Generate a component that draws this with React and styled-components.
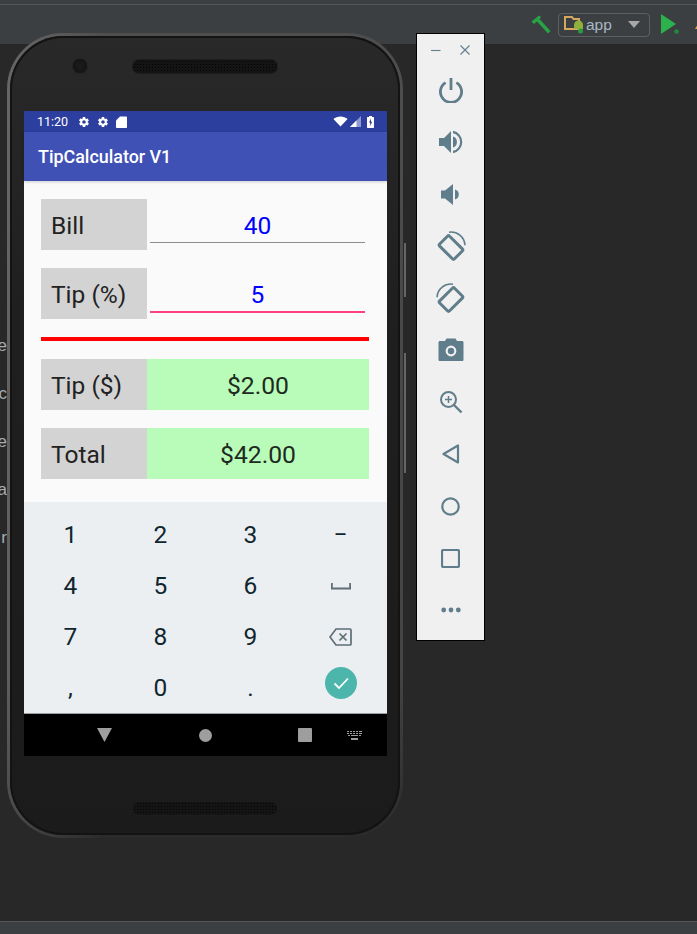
import React from 'react'
import styled, { createGlobalStyle } from 'styled-components'

const ICON = '#607d8b'
const SANS = 'Roboto, "Noto Sans", sans-serif'

const GlobalStyle = createGlobalStyle`
  html, body {
    margin: 0;
    padding: 0;
    height: 100%;
    background: #282828;
    font-family: ${SANS};
    overflow: hidden;
  }
  #root {
    height: 100%;
  }
`

const Ide = styled.div`
  position: relative;
  width: 697px;
  height: 934px;
  display: flex;
  flex-direction: column;
  overflow: hidden;
  background: #282828;
`

const TopStrip = styled.div`
  height: 5px;
  flex: none;
  box-sizing: border-box;
  background: #3c3f41;
  border-bottom: 1px solid #555759;
`

const Toolbar = styled.div`
  height: 39px;
  flex: none;
  background: #3c3f41;
  display: flex;
  align-items: center;
  justify-content: flex-end;
  box-sizing: border-box;
  overflow: hidden;
`

const ConfigSelect = styled.div`
  width: 92px;
  height: 24px;
  margin: 0 10px 0 7px;
  padding: 0 9px 0 5px;
  box-sizing: border-box;
  border: 1px solid #5e6060;
  border-radius: 4px;
  display: flex;
  align-items: center;
  color: #a9b7c6;
  font: 15.5px 'Liberation Sans', sans-serif;
`

const ConfigName = styled.span`
  flex: 1;
  margin-left: 2px;
  line-height: 21px;
`

const DebugSlot = styled.div`
  display: flex;
  margin: 0 -8px 0 15px;
`

const Workspace = styled.div`
  flex: 1;
  display: flex;
  flex-direction: column;
  padding-top: 280px;
  background: #282828;
`

const CodeLine = styled.div`
  width: 7px;
  height: 48px;
  overflow: hidden;
  display: flex;
  justify-content: flex-end;
  color: #a4adb5;
  font: 17px/44px 'Liberation Sans', sans-serif;
`

const StatusStrip = styled.div`
  height: 13px;
  flex: none;
  box-sizing: border-box;
  background: #3c3f41;
  border-top: 1px solid #555759;
`

/* the emulator window and its tool panel float over the IDE */
const Phone = styled.div`
  position: absolute;
  left: 7px;
  top: 33px;
  width: 396px;
  height: 805px;
  box-sizing: border-box;
  padding: 75px 16px 0 14px;
  border-radius: 56px;
  border: 3px solid transparent;
  background:
    linear-gradient(180deg, #292929 0%, #1f1f1f 35%, #1b1b1c 100%) padding-box,
    linear-gradient(90deg, rgba(255, 255, 255, 0.14), rgba(255, 255, 255, 0) 25%) border-box,
    linear-gradient(180deg, #4e4e4e 0%, #444 80%, #2a2a2a 100%) border-box;
  box-shadow: inset 0 0 0 2px #131313;
`

const SideKey = styled.div`
  position: absolute;
  left: 394px;
  top: ${(p) => p.$top}px;
  width: 2px;
  height: ${(p) => p.$height}px;
  background: #666;
`

const Camera = styled.div`
  position: absolute;
  left: 63px;
  top: 23px;
  width: 14px;
  height: 14px;
  border-radius: 50%;
  background: #1a1a1d;
  box-shadow: 0 0 0 1px #232323, inset 0 0 0 3px #161618;
`

const Speaker = styled.div`
  position: absolute;
  left: 123px;
  top: ${(p) => p.$top}px;
  width: 144px;
  height: 13px;
  border-radius: 6px;
  background-color: #141414;
  background-image: radial-gradient(circle, #050505 0.8px, transparent 1px);
  background-size: 3px 3px;
  box-shadow: 0 0 0 1px #1d1d1d;
`

const Screen = styled.div`
  width: 363px;
  height: 645px;
  display: flex;
  flex-direction: column;
  background: #fafafa;
`

const StatusBar = styled.div`
  height: 21px;
  flex: none;
  background: #2c3e9e;
  display: flex;
  align-items: center;
  padding: 0 13px;
  gap: 7px;
  color: #fff;
  font-size: 12.5px;
`

const Clock = styled.span`
  margin-right: 3px;
`

const Spacer = styled.div`
  flex: 1;
`

const SignalGroup = styled.div`
  display: flex;
  align-items: center;
  gap: 2px;
  margin-right: -1px;
`

const AppBar = styled.div`
  height: 49px;
  flex: none;
  background: #3f51b5;
  color: #fff;
  display: flex;
  align-items: center;
  padding-left: 14px;
  font-size: 17.9px;
  font-weight: 500;
  box-shadow: 0 1px 3px rgba(0, 0, 0, 0.18);
  z-index: 1;
`

const Form = styled.div`
  flex: 1;
  padding: 18px 18px 0 17px;
  display: flex;
  flex-direction: column;
  gap: 18px;
`

const Row = styled.div`
  display: flex;
  height: 51px;
`

const Label = styled.div`
  width: 106px;
  box-sizing: border-box;
  padding-left: 10px;
  background: #d3d3d3;
  color: #222;
  font-size: 24.5px;
  line-height: 53px;
`

const Field = styled.div`
  flex: 1;
  margin: 0 4px 0 3px;
  height: ${(p) => (p.$focused ? 45 : 44)}px;
  box-sizing: border-box;
  border-bottom: ${(p) => (p.$focused ? '2px solid #ff4081' : '1px solid #8c8c8c')};
  color: #0000ff;
  font-size: 24.5px;
  line-height: 53px;
  text-align: center;
`

const Result = styled.div`
  flex: 1;
  background: #b9fcb9;
  color: #1e2a1e;
  font-size: 24.7px;
  line-height: 53px;
  text-align: center;
`

const Divider = styled.div`
  height: 4px;
  background: #ff0000;
`

const Keyboard = styled.div`
  height: 212px;
  flex: none;
  box-sizing: border-box;
  background: #eceff1;
  padding-top: 7px;
  display: grid;
  grid-template-columns: repeat(4, 90px);
  grid-auto-rows: 51px;
  justify-content: center;
  border-bottom: 1px solid #9aa0a3;
`

const Key = styled.div`
  display: flex;
  align-items: center;
  justify-content: center;
  color: #10262f;
  font-size: 24.5px;
  line-height: 51px;
`

const DoneKey = styled.div`
  width: 32px;
  height: 32px;
  margin-bottom: 10px;
  border-radius: 50%;
  background: #4db6ac;
  display: flex;
  align-items: center;
  justify-content: center;
`

const NavBar = styled.div`
  height: 42px;
  flex: none;
  background: #000;
  display: flex;
  align-items: center;
  padding-left: 73px;
`

const NavSlot = styled.div`
  display: flex;
  margin-left: ${(p) => p.$gap || 0}px;
`

const Panel = styled.div`
  position: absolute;
  left: 416px;
  top: 33px;
  width: 69px;
  height: 608px;
  box-sizing: border-box;
  border: 1px solid #000;
  background: #f0f0f0;
  display: flex;
  flex-direction: column;
  align-items: center;
`

const WindowButtons = styled.div`
  height: 28px;
  margin-top: 2px;
  align-self: stretch;
  display: flex;
  align-items: center;
  padding-left: 14px;
  gap: 19px;
`

const PanelButton = styled.div`
  height: 52px;
  width: 100%;
  flex: none;
  display: flex;
  align-items: center;
  justify-content: center;
`

const RotateSvg = styled.svg`
  transform: ${(p) => (p.$flip ? 'scaleX(-1)' : 'none')};
`

const Gear = () => (
  <svg width="12" height="12" viewBox="0 0 24 24" fill="#fff">
    <path d="M19.4 13c.1-.3.1-.7.1-1s0-.7-.1-1l2.1-1.600c.2-.2.2-.4.1-.6l-2-3.500c-.1-.2-.4-.3-.6-.2l-2.500 1c-.5-.4-1.100-.7-1.700-1l-.4-2.600C14.400 2.200 14.200 2 14 2h-4c-.2 0-.5.2-.5.400l-.4 2.600c-.6.300-1.200.6-1.700 1l-2.500-1c-.2-.1-.5 0-.6.200l-2 3.500c-.1.200-.1.500.1.600L4.500 11c0 .3-.1.700-.1 1s0 .7.1 1l-2.100 1.600c-.2.200-.2.400-.1.600l2 3.500c.1.200.4.300.6.200l2.500-1c.5.400 1.100.7 1.700 1l.4 2.600c0 .2.300.4.500.4h4c.2 0 .5-.2.500-.4l.4-2.600c.6-.3 1.200-.6 1.700-1l2.500 1c.2.100.5 0 .6-.2l2-3.500c.1-.2.100-.4-.1-.6L19.400 13zM12 15.500c-1.900 0-3.500-1.600-3.500-3.500s1.600-3.500 3.500-3.500 3.500 1.600 3.500 3.500-1.600 3.500-3.500 3.500z" />
  </svg>
)

const SdCard = () => (
  <svg width="11" height="12" viewBox="0 0 11 12" fill="#fff">
    <path d="M4 .5h6c.6 0 1 .4 1 1v9.500c0 .6-.4 1-1 1H1c-.6 0-1-.4-1-1V4.500z" />
  </svg>
)

const Wifi = () => (
  <svg width="15" height="11" viewBox="0 0 16 12" fill="#fff">
    <path d="M8 11.500 .3 3.200C2.300 1.500 5 .5 8 .5s5.700 1 7.700 2.700z" />
  </svg>
)

const Signal = () => (
  <svg width="11" height="11" viewBox="0 0 11 11">
    <path d="M11 0v11H0z" fill="#8f99cf" />
    <path d="M6.500 4.500V11H0z" fill="#fff" />
  </svg>
)

const Battery = () => (
  <svg width="7" height="12" viewBox="0 0 7 12" fill="#fff">
    <path d="M2 0h3v1h1.500c.3 0 .5.200.5.500v10c0 .3-.2.500-.5.500H.5c-.3 0-.5-.2-.5-.500v-10C0 1.200.2 1 .5 1H2z" />
    <path d="M4 2.500 2 6.500h1.200V10l2-4.200H4z" fill="#2c3e9e" />
  </svg>
)

const Spacebar = () => (
  <svg width="20" height="8" viewBox="0 0 20 8" fill="none" stroke="#5f6f77" strokeWidth="1.800">
    <path d="M.9 1v5.500h18.200V1" />
  </svg>
)

const Backspace = () => (
  <svg width="23" height="18" viewBox="0 0 23 18" fill="none" stroke="#5d6e76" strokeWidth="1.700">
    <path d="M7 1h14c.6 0 1 .4 1 1v14c0 .6-.4 1-1 1H7l-6-8z" />
    <path d="M10.500 5.500l7 7M17.500 5.500l-7 7" />
  </svg>
)

const Check = () => (
  <svg width="18" height="18" viewBox="0 0 18 18" fill="none" stroke="#fff" strokeWidth="1.800">
    <path d="M2.500 9.500l4.500 4.500 9-9.500" />
  </svg>
)

const NavBack = () => (
  <svg width="15" height="14" viewBox="0 0 15 14" fill="#9e9e9e">
    <path d="M0 0h15L7.500 14z" />
  </svg>
)

const NavHome = () => (
  <svg width="13" height="13" viewBox="0 0 13 13" fill="#9e9e9e">
    <circle cx="6.500" cy="6.500" r="6.500" />
  </svg>
)

const NavRecent = () => (
  <svg width="14" height="14" viewBox="0 0 14 14" fill="#9e9e9e">
    <rect width="14" height="14" rx="1" />
  </svg>
)

const NavKeyboard = () => (
  <svg width="15" height="9" viewBox="0 0 15 9" fill="#9e9e9e">
    <path d="M0 0h2v1H0zM3 0h2v1H3zM6 0h2v1H6zM9 0h2v1H9zM12 0h3v1h-3zM0 2h2v1H0zM3 2h2v1H3zM6 2h2v1H6zM9 2h2v1H9zM12 2h3v1h-3zM1 4h2v1H1zM4 4h7v1H4zM12 4h2v1h-2zM4 7h7v2H4z" />
  </svg>
)

const Minimize = () => (
  <svg width="10" height="10" viewBox="0 0 10 10" stroke={ICON} strokeWidth="1.100">
    <path d="M0 5.500h9.500" />
  </svg>
)

const CloseX = () => (
  <svg width="10" height="10" viewBox="0 0 10 10" stroke={ICON} strokeWidth="1.100">
    <path d="M.5.500l9 9M9.500.500l-9 9" />
  </svg>
)

const PowerIcon = () => (
  <svg width="24" height="25" viewBox="0 0 24 25" fill="none" stroke={ICON} strokeWidth="2.800">
    <path d="M12 0v12" />
    <path d="M6.600 4.600a10.600 10.600 0 1 0 10.800 0" />
  </svg>
)

const VolumeUpIcon = () => (
  <svg width="24" height="24" viewBox="0 0 24 24" fill={ICON}>
    <path d="M0 8v8h5l7 7V1L5 8z" />
    <path d="M14 6.500a5.800 5.800 0 0 1 0 11z" />
    <path d="M14 .8v2.400a9 9 0 0 1 0 17.600v2.400a11.400 11.400 0 0 0 0-22.400z" />
  </svg>
)

const VolumeDownIcon = () => (
  <svg width="19" height="21" viewBox="0 0 19 21" fill={ICON}>
    <path d="M0 6.500v8h4l8 6.500V0L4 6.500z" />
    <path d="M14 5.500a5.200 5.200 0 0 1 0 10z" />
  </svg>
)

const RotateIcon = ({ $flip }) => (
  <RotateSvg $flip={$flip} width="30" height="31" viewBox="0 0 30 31" fill="none" stroke={ICON}>
    <rect x="4.500" y="9.500" width="21" height="14" rx="1.500" strokeWidth="3" transform="rotate(45 15 16.500)" />
    <path d="M13 1.200a14 14 0 0 1 16 13" strokeWidth="1.600" />
  </RotateSvg>
)

const CameraIcon = () => (
  <svg width="26" height="24" viewBox="0 0 26 24">
    <path
      fill={ICON}
      d="M8.500 .5h9l1.500 2.500h5c1 0 1.500.6 1.500 1.500v17c0 1-.5 1.500-1.500 1.500H2c-1 0-1.500-.5-1.500-1.500v-17C.5 3.600 1 3 2 3h5z"
    />
    <circle cx="13" cy="13" r="4.300" fill="none" stroke="#f0f0f0" strokeWidth="2.200" />
  </svg>
)

const ZoomIcon = () => (
  <svg width="24" height="24" viewBox="0 0 24 24" fill="none" stroke={ICON} strokeWidth="2">
    <circle cx="9.500" cy="9.500" r="7.500" />
    <path d="M15 15l7.500 7.500" strokeWidth="2.400" />
    <path d="M9.500 6v7M6 9.500h7" strokeWidth="1.500" />
  </svg>
)

const BackIcon = () => (
  <svg width="18" height="20" viewBox="0 0 18 20" fill="none" stroke={ICON} strokeWidth="2.200" strokeLinejoin="round">
    <path d="M16 1.500v17L1.500 10z" />
  </svg>
)

const HomeIcon = () => (
  <svg width="19" height="19" viewBox="0 0 19 19" fill="none" stroke={ICON} strokeWidth="2.200">
    <circle cx="9.500" cy="9.500" r="8.200" />
  </svg>
)

const RecentIcon = () => (
  <svg width="19" height="19" viewBox="0 0 19 19" fill="none" stroke={ICON} strokeWidth="2.200">
    <rect x="1" y="1" width="17" height="17" rx="1.500" />
  </svg>
)

const MoreIcon = () => (
  <svg width="20" height="6" viewBox="0 0 20 6" fill={ICON}>
    <circle cx="2.700" cy="3" r="2.400" />
    <circle cx="10" cy="3" r="2.400" />
    <circle cx="17.300" cy="3" r="2.400" />
  </svg>
)

const Hammer = () => (
  <svg width="20" height="19" viewBox="0 0 20 19" fill="#27a345">
    <path d="M8 .5l2 1.500-1.500 2L19.500 16 17 18.500 6 6.500 3 9 .5 6.500z" />
  </svg>
)

const ModuleIcon = () => (
  <svg width="20" height="20" viewBox="0 0 20 20">
    <path d="M1 2h7l1.500 2H15v10H1z" fill="none" stroke="#d5a75f" strokeWidth="2" />
    <path d="M10 10a4 4 0 0 1 9 0v4h-9z" fill="#8fb13c" />
    <circle cx="16.500" cy="16" r="2.500" fill="#2a9a3e" />
  </svg>
)

const ComboArrow = () => (
  <svg width="12" height="7" viewBox="0 0 12 7" fill="#a7a7a7">
    <path d="M0 0h12L6 7z" />
  </svg>
)

const RunIcon = () => (
  <svg width="20" height="21" viewBox="0 0 20 21">
    <path d="M1 0v20L16 10z" fill="#2bb24c" />
    <circle cx="16.500" cy="17.500" r="2.300" fill="#1f8a38" />
  </svg>
)

const DebugPeek = () => (
  <svg width="10" height="10" viewBox="0 0 10 10" fill="#d9a343">
    <path d="M5 0l5 9H0z" />
  </svg>
)

const keys = [
  ['1', '2', '3', '−'],
  ['4', '5', '6', <Spacebar key="space" />],
  ['7', '8', '9', <Backspace key="del" />],
  [',', '0', '.', <DoneKey key="done"><Check /></DoneKey>],
]

const panelIcons = [
  <PowerIcon />,
  <VolumeUpIcon />,
  <VolumeDownIcon />,
  <RotateIcon />,
  <RotateIcon $flip />,
  <CameraIcon />,
  <ZoomIcon />,
  <BackIcon />,
  <HomeIcon />,
  <RecentIcon />,
  <MoreIcon />,
]

export default function App() {
  return (
    <Ide>
      <GlobalStyle />
      <TopStrip />
      <Toolbar>
        <Hammer />
        <ConfigSelect>
          <ModuleIcon />
          <ConfigName>app</ConfigName>
          <ComboArrow />
        </ConfigSelect>
        <RunIcon />
        <DebugSlot>
          <DebugPeek />
        </DebugSlot>
      </Toolbar>
      <Workspace>
        {['e', 'c', 'e', 'a', 'r'].map((ch, i) => (
          <CodeLine key={i}>{ch}</CodeLine>
        ))}
      </Workspace>
      <StatusStrip />

      <Phone>
        <Camera />
        <Speaker $top={24} />
        <SideKey $top={207} $height={54} />
        <SideKey $top={317} $height={120} />
        <Screen>
          <StatusBar>
            <Clock>11:20</Clock>
            <Gear />
            <Gear />
            <SdCard />
            <Spacer />
            <SignalGroup>
              <Wifi />
              <Signal />
            </SignalGroup>
            <Battery />
          </StatusBar>
          <AppBar>TipCalculator V1</AppBar>
          <Form>
            <Row>
              <Label>Bill</Label>
              <Field>40</Field>
            </Row>
            <Row>
              <Label>Tip (%)</Label>
              <Field $focused>5</Field>
            </Row>
            <Divider />
            <Row>
              <Label>Tip ($)</Label>
              <Result>$2.00</Result>
            </Row>
            <Row>
              <Label>Total</Label>
              <Result>$42.00</Result>
            </Row>
          </Form>
          <Keyboard>
            {keys.flat().map((k, i) => (
              <Key key={i}>{k}</Key>
            ))}
          </Keyboard>
          <NavBar>
            <NavSlot>
              <NavBack />
            </NavSlot>
            <NavSlot $gap={87}>
              <NavHome />
            </NavSlot>
            <NavSlot $gap={86}>
              <NavRecent />
            </NavSlot>
            <NavSlot $gap={35}>
              <NavKeyboard />
            </NavSlot>
          </NavBar>
        </Screen>
        <Speaker $top={766} />
      </Phone>

      <Panel>
        <WindowButtons>
          <Minimize />
          <CloseX />
        </WindowButtons>
        {panelIcons.map((icon, i) => (
          <PanelButton key={i}>{icon}</PanelButton>
        ))}
      </Panel>
    </Ide>
  )
}
